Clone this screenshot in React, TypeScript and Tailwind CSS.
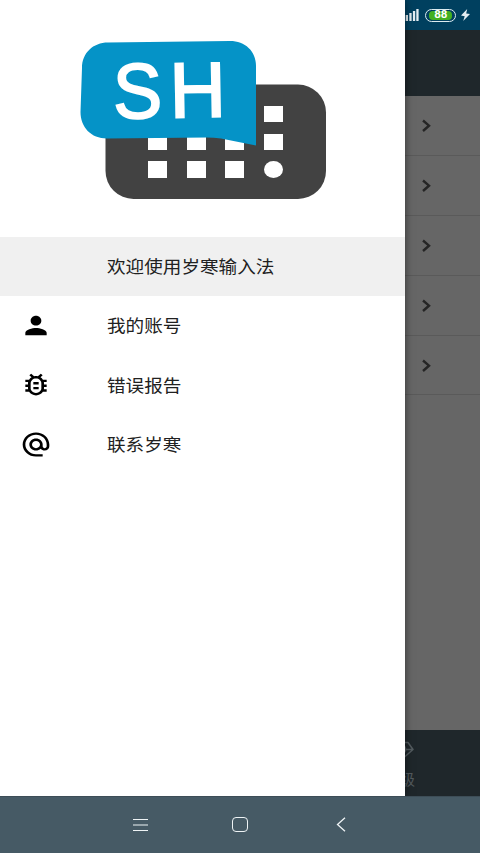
import { MdAlternateEmail, MdOutlineBugReport, MdPerson } from "react-icons/md";
import type { IconType } from "react-icons";

type MenuItem = {
  label: string;
  icon?: IconType;
};

const menuItems: MenuItem[] = [
  { label: "欢迎使用岁寒输入法" },
  { label: "我的账号", icon: MdPerson },
  { label: "错误报告", icon: MdOutlineBugReport },
  { label: "联系岁寒", icon: MdAlternateEmail },
];

const settingRows = [1, 2, 3, 4, 5];

function StatusBar() {
  return (
    <div className="flex h-[30px] shrink-0 items-center justify-end bg-[#00405f] pr-[10px]">
      <svg className="mr-[6px] h-3 w-[17px]" viewBox="0 0 17 12" fill="#e4edf2">
        <rect x="0" y="8" width="2.3" height="4" />
        <rect x="3.7" y="6" width="2.3" height="6" />
        <rect x="7.3" y="4" width="2.3" height="8" />
        <rect x="10.9" y="2" width="2.3" height="10" />
        <rect x="14.3" y="0" width="2.3" height="12" />
      </svg>
      <div className="flex h-[13px] w-[31px] items-center justify-center rounded-full border-[1.5px] border-[#dcebf0] p-[1px]">
        <div className="flex h-full w-[23px] items-center justify-center rounded-[4px] bg-[#42b022] text-[10px] leading-none font-bold text-white">
          <span className="-mt-[1px] scale-x-115 font-['Roboto',sans-serif]">88</span>
        </div>
      </div>
      <svg className="ml-[5px] h-3 w-[9px]" viewBox="0 0 9 12" fill="#e4edf2" preserveAspectRatio="none">
        <path d="M6.2 0 0 6.6l3.7.6L2.2 12 9 5 5.2 4.5z" />
      </svg>
    </div>
  );
}

function SettingsPage() {
  return (
    <div className="flex min-h-0 flex-1 flex-col bg-[#666666]">
      <StatusBar />
      <div className="h-[66px] shrink-0 bg-[#1f272b]" />
      <div className="flex-1">
        {settingRows.map((row) => (
          <div
            key={row}
            className="flex h-[59.9px] items-center justify-end border-b border-[#5a5a5a] pr-12"
          >
            <svg
              className="mr-[1px] h-[13px] w-[10px]"
              viewBox="0 0 10 13"
              fill="none"
              stroke="#252525"
              strokeWidth="2.4"
            >
              <path d="M2 1.500 8 6.700 2 12" />
            </svg>
          </div>
        ))}
      </div>
      <div className="grid h-[66px] shrink-0 grid-cols-3 bg-[#1f272b] text-[#535b5f]">
        <div />
        <div />
        <div className="flex flex-col items-center pt-[11px]">
          <svg
            className="h-[21px] w-7"
            viewBox="0 0 28 21"
            fill="none"
            stroke="currentColor"
            strokeWidth="1.5"
            strokeLinejoin="round"
          >
            <path d="M6 1.500h16l5 7L14 20 1 8.500z M1 8.500h26 M8 8.500 14 20l6-11.500-3-7" />
          </svg>
          <span className="mt-[9px] text-[15px] leading-[18px]">升级</span>
        </div>
      </div>
    </div>
  );
}

function Logo() {
  return (
    <svg className="h-[237px] w-full shrink-0" viewBox="0 0 405 237">
      <rect x="105.5" y="84.5" width="220.5" height="114.5" rx="28" fill="#424242" />
      <g fill="#fff">
        <rect x="264" y="106" width="19" height="16" />
        <rect x="148" y="134" width="19" height="16" />
        <rect x="187" y="134" width="19" height="16" />
        <rect x="225" y="134" width="19" height="16" />
        <rect x="264" y="134" width="19" height="16" />
        <rect x="148" y="161" width="19" height="17" />
        <rect x="187" y="161" width="19" height="17" />
        <rect x="225" y="161" width="19" height="17" />
        <ellipse cx="273.5" cy="169.5" rx="9.5" ry="8.5" />
      </g>
      <path
        d="M108 42.5 230 41C245 41 256 51 256 66V145.5L221 138.5Q214 137.5 206 137.5L107 138.5C91 138.5 80.5 127 80.5 112L82 68C82 53 93 42.5 108 42.5Z"
        fill="#0593c7"
      />
      <g
        fill="#fff"
        stroke="#fff"
        strokeWidth="2"
        fontFamily="'Liberation Sans', sans-serif"
        fontSize="78"
        transform="rotate(-1 168 90)"
      >
        <text x="113" y="117.5" textLength="49" lengthAdjust="spacingAndGlyphs">
          S
        </text>
        <text x="169.5" y="117.5">
          H
        </text>
      </g>
    </svg>
  );
}

function Drawer() {
  return (
    <aside className="absolute top-0 left-0 flex h-[796px] w-[405px] flex-col bg-white shadow-[0_0_8px_rgba(0,0,0,0.5)]">
      <Logo />
      <nav>
        {menuItems.map(({ label, icon: Icon }, index) => (
          <a
            key={label}
            className={`flex h-[59.2px] items-center pl-5 text-[#212121] ${
              index === 0 ? "bg-[#f0f0f0]" : ""
            }`}
          >
            <span className="flex w-[87px] shrink-0 text-black">
              {Icon ? <Icon className="h-[29px] w-8" preserveAspectRatio="none" /> : null}
            </span>
            <span className="scale-y-94 pt-[2px] text-[18.6px] leading-none whitespace-nowrap">
              {label}
            </span>
          </a>
        ))}
      </nav>
    </aside>
  );
}

function NavigationBar() {
  return (
    <div className="relative z-10 flex h-[57px] shrink-0 items-center justify-between border-t border-[#3d4d57] bg-[#465a65] pr-[132px] pb-[1px] pl-[132px] text-[#eef3f5]">
      <svg className="h-[14px] w-4" viewBox="0 0 16 14" stroke="currentColor" strokeWidth="1.2">
        <path d="M1 1.5h15M1 7h15M1 12.5h15" />
      </svg>
      <div className="h-[15px] w-4 rounded-[4px] border border-current" />
      <svg
        className="h-[15px] w-4"
        viewBox="0 0 16 15"
        fill="none"
        stroke="currentColor"
        strokeWidth="1.3"
      >
        <path d="M13 .8 5.5 7.5 13 14.2" />
      </svg>
    </div>
  );
}

export default function App() {
  return (
    <div className="relative flex h-[853px] w-[480px] flex-col overflow-hidden font-['Roboto','Noto_Sans_CJK_SC',sans-serif]">
      <SettingsPage />
      <Drawer />
      <NavigationBar />
    </div>
  );
}
